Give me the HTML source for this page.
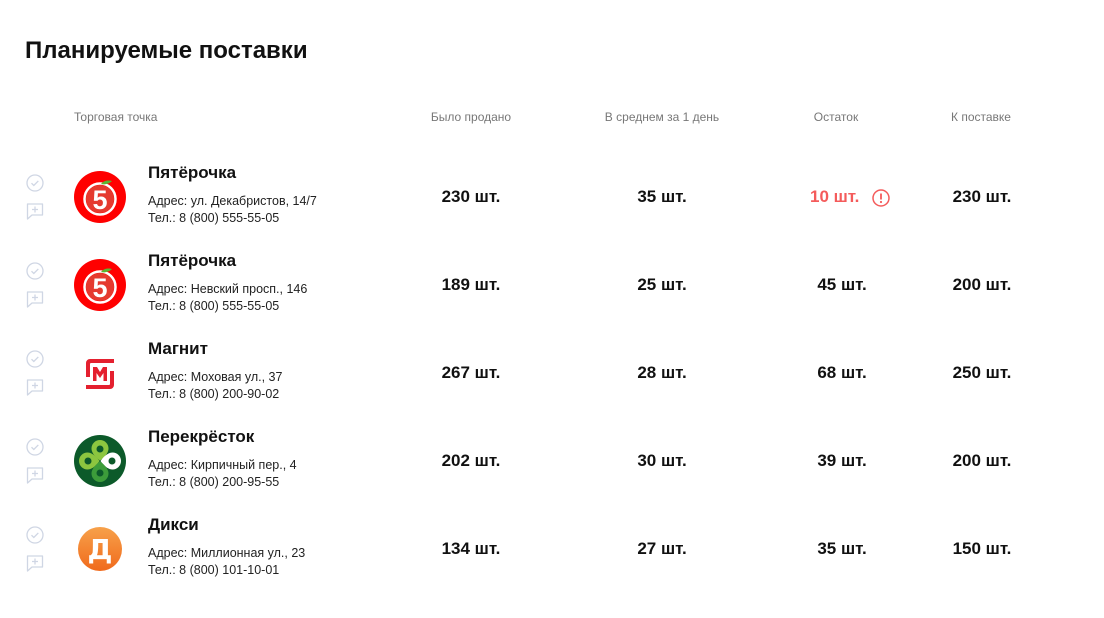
<!DOCTYPE html>
<html><head><meta charset="utf-8"><style>
body{margin:0;width:1104px;height:618px;background:#fff;font-family:"Liberation Sans",sans-serif;color:#111;position:relative;overflow:hidden}
.a{position:absolute;white-space:nowrap}
h1{position:absolute;left:25px;top:37px;margin:0;font-size:24px;font-weight:600}
.h{font-size:12px;color:#777;top:110px}
.c{transform:translateX(-50%)}
.n{font-size:17px;font-weight:600}
.s{font-size:12.5px;color:#222}
.num{font-size:17px;font-weight:600}
</style></head><body>
<h1>Планируемые поставки</h1>
<div class="a h" style="left:74px">Торговая точка</div>
<div class="a h c" style="left:471px">Было продано</div>
<div class="a h c" style="left:662px">В среднем за 1 день</div>
<div class="a h c" style="left:836px">Остаток</div>
<div class="a h c" style="left:981px">К поставке</div>

<svg width="0" height="0" style="position:absolute">
<defs>
<g id="ic"><circle cx="9" cy="9" r="8" fill="none" stroke="#cfd6e4" stroke-width="1.3"/><path d="M5.5 9.2l2.3 2.3 4.5-4.6" fill="none" stroke="#cfd6e4" stroke-width="1.3"/>
<path d="M1.5 30h15v11H6l-4.5 4z" fill="none" stroke="#cfd6e4" stroke-width="1.3" stroke-linejoin="round"/><path d="M9 32.5v6M6 35.5h6" stroke="#cfd6e4" stroke-width="1.3"/></g>
<g id="p5"><circle cx="26" cy="26" r="26" fill="#f00"/><circle cx="26" cy="28" r="15.5" fill="none" stroke="#fff" stroke-width="2.5"/><circle cx="26" cy="28" r="14" fill="#e53a2f"/><text x="26" y="38" text-anchor="middle" font-size="27" font-weight="bold" fill="#fff" font-family="Liberation Sans">5</text><path d="M27 13c3-4 8-4 11-3-3 3-8 4-11 3z" fill="#5cb531"/></g>
<path id="drop" d="M26 25.5C19.5 21 17.5 16.5 17.5 13.5a8.5 8.5 0 0 1 17 0c0 3-2 7.5-8.5 12z"/>
</defs></svg>

<svg class="a" style="left:26px;top:174px" width="20" height="400"><use href="#ic"/><use href="#ic" y="88"/><use href="#ic" y="176"/><use href="#ic" y="264"/><use href="#ic" y="352"/></svg>

<svg class="a" style="left:74px;top:171px" width="52" height="52"><use href="#p5"/></svg>
<svg class="a" style="left:74px;top:259px" width="52" height="52"><use href="#p5"/></svg>
<svg class="a" style="left:84px;top:357px" width="32" height="34">
<path d="M2 20V6a4 4 0 0 1 4-4h24v4H7a1 1 0 0 0-1 1v13z" fill="#e4202f"/>
<path d="M30 14v14a4 4 0 0 1-4 4H2v-4h23a1 1 0 0 0 1-1V14z" fill="#e4202f"/>
<path d="M9 24V10h4l3 5 3-5h4v14h-3.5v-8l-3.5 5-3.5-5v8z" fill="#e4202f"/>
</svg>
<svg class="a" style="left:74px;top:435px" width="52" height="52"><circle cx="26" cy="26" r="26" fill="#0c5a2a"/>
<g><use href="#drop" fill="#8cc63f"/><circle cx="26" cy="14" r="3.5" fill="#0c5a2a"/></g>
<g transform="rotate(-90 26 26)"><use href="#drop" fill="#8cc63f"/><circle cx="26" cy="14" r="3.5" fill="#0c5a2a"/></g>
<g transform="rotate(90 26 26)"><use href="#drop" fill="#fff"/><circle cx="26" cy="14" r="3.5" fill="#0c5a2a"/></g>
<g transform="rotate(180 26 26)"><use href="#drop" fill="#3c9c3a"/><circle cx="26" cy="14" r="3.5" fill="#0c5a2a"/></g>
</svg>
<svg class="a" style="left:78px;top:527px" width="44" height="44"><defs><linearGradient id="g" x1="0" y1="0" x2="0" y2="1"><stop offset="0" stop-color="#f7a14a"/><stop offset="1" stop-color="#f06a1c"/></linearGradient></defs><circle cx="22" cy="22" r="22" fill="url(#g)"/><text x="22" y="32" text-anchor="middle" font-size="28" font-weight="bold" fill="#fff" font-family="DejaVu Sans">Д</text></svg>

<div class="a n" style="left:148px;top:163px">Пятёрочка</div>
<div class="a s" style="left:148px;top:194px">Адрес: ул. Декабристов, 14/7</div>
<div class="a s" style="left:148px;top:211px">Тел.: 8 (800) 555-55-05</div>
<div class="a n" style="left:148px;top:251px">Пятёрочка</div>
<div class="a s" style="left:148px;top:282px">Адрес: Невский просп., 146</div>
<div class="a s" style="left:148px;top:299px">Тел.: 8 (800) 555-55-05</div>
<div class="a n" style="left:148px;top:339px">Магнит</div>
<div class="a s" style="left:148px;top:370px">Адрес: Моховая ул., 37</div>
<div class="a s" style="left:148px;top:387px">Тел.: 8 (800) 200-90-02</div>
<div class="a n" style="left:148px;top:427px">Перекрёсток</div>
<div class="a s" style="left:148px;top:458px">Адрес: Кирпичный пер., 4</div>
<div class="a s" style="left:148px;top:475px">Тел.: 8 (800) 200-95-55</div>
<div class="a n" style="left:148px;top:515px">Дикси</div>
<div class="a s" style="left:148px;top:546px">Адрес: Миллионная ул., 23</div>
<div class="a s" style="left:148px;top:563px">Тел.: 8 (800) 101-10-01</div>

<div class="a num c" style="left:471px;top:187px">230 шт.</div>
<div class="a num c" style="left:662px;top:187px">35 шт.</div>
<div class="a num" style="left:810px;top:187px;color:#f45b5b">10 шт.</div>
<svg class="a" style="left:871px;top:188px" width="20" height="20"><circle cx="10" cy="10" r="8" fill="none" stroke="#f45b5b" stroke-width="1.5"/><path d="M10 5.5v6" stroke="#f45b5b" stroke-width="1.8"/><circle cx="10" cy="14" r="1.1" fill="#f45b5b"/></svg>
<div class="a num c" style="left:982px;top:187px">230 шт.</div>

<div class="a num c" style="left:471px;top:275px">189 шт.</div>
<div class="a num c" style="left:662px;top:275px">25 шт.</div>
<div class="a num c" style="left:842px;top:275px">45 шт.</div>
<div class="a num c" style="left:982px;top:275px">200 шт.</div>

<div class="a num c" style="left:471px;top:363px">267 шт.</div>
<div class="a num c" style="left:662px;top:363px">28 шт.</div>
<div class="a num c" style="left:842px;top:363px">68 шт.</div>
<div class="a num c" style="left:982px;top:363px">250 шт.</div>

<div class="a num c" style="left:471px;top:451px">202 шт.</div>
<div class="a num c" style="left:662px;top:451px">30 шт.</div>
<div class="a num c" style="left:842px;top:451px">39 шт.</div>
<div class="a num c" style="left:982px;top:451px">200 шт.</div>

<div class="a num c" style="left:471px;top:539px">134 шт.</div>
<div class="a num c" style="left:662px;top:539px">27 шт.</div>
<div class="a num c" style="left:842px;top:539px">35 шт.</div>
<div class="a num c" style="left:982px;top:539px">150 шт.</div>
</body></html>
